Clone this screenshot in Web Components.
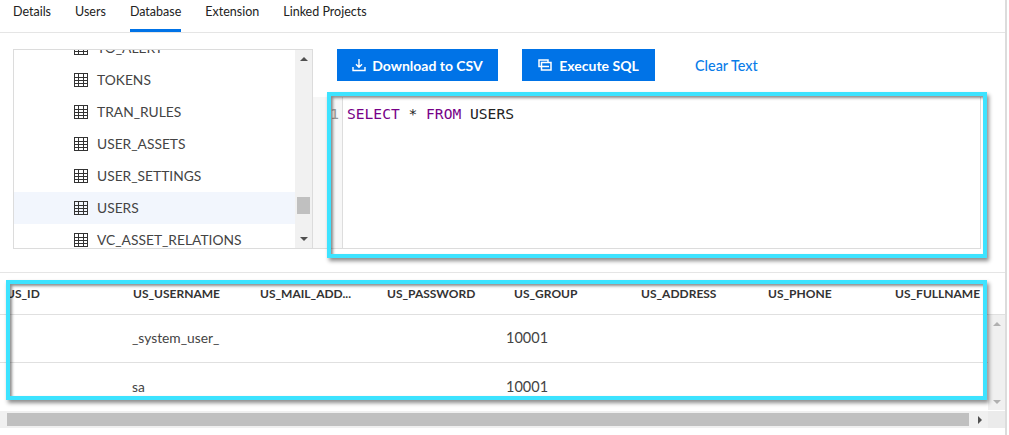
<!DOCTYPE html>
<html>
<head>
<meta charset="utf-8">
<title>Database</title>
<style>
  html, body { margin: 0; height: 100%; overflow: hidden; background: #fff; font-family: Lato, "Open Sans", sans-serif; color: #333; }
</style>
</head>
<body>
<project-page></project-page>
<script>
const ICON_TABLE = `<svg width="14" height="14" viewBox="0 0 14 14" fill="none" stroke="#333" stroke-width="1" shape-rendering="crispEdges"><path d="M.5.5h13v13H.5zM.5 4.5h13M.5 7.5h13M.5 10.5h13M4.5.5v13M9.5.5v13"/></svg>`;

class AppTabs extends HTMLElement {
  constructor(){
    super();
    this.attachShadow({ mode: 'open' });
    this.shadowRoot.innerHTML = `
      <style>
        :host{ display: flex; gap: 24px; height: 32px; padding-left: 13px; border-bottom: 1px solid #e5e5e5; font-size: 12.5px; color: #222; box-sizing: content-box; }
        span{ height: 32px; line-height: 23px; box-sizing: border-box; }
        .active{ border-bottom: 3px solid #0073e7; }
      </style>
      <span>Details</span><span>Users</span><span class="active">Database</span><span>Extension</span><span>Linked Projects</span>
    `;
  }
}

class VScrollbar extends HTMLElement {
  constructor(){
    super();
    this.attachShadow({ mode: 'open' });
    this.shadowRoot.innerHTML = `
      <style>
        :host{ display: flex; flex-direction: column; align-items: center; width: 17px; background: #f1f1f1; position: relative; flex: none; }
        .up, .down{ width: 0; height: 0; border-left: 4px solid transparent; border-right: 4px solid transparent; }
        .up{ border-bottom: 4px solid var(--arrow, #505050); margin-top: 7px; }
        .down{ border-top: 4px solid var(--arrow, #505050); margin-top: auto; margin-bottom: var(--arrow-bottom, 7px); }
        .thumb{ position: absolute; left: 2px; right: 2px; top: var(--thumb-top, 0); height: var(--thumb-height, 0); background: #c0c0c0; }
      </style>
      <div class="up"></div><div class="thumb"></div><div class="down"></div>
    `;
  }
}

class DbTree extends HTMLElement {
  constructor(){
    super();
    this.attachShadow({ mode: 'open' });
    const names = ['TO_ALERT', 'TOKENS', 'TRAN_RULES', 'USER_ASSETS', 'USER_SETTINGS', 'USERS', 'VC_ASSET_RELATIONS'];
    const rows = names.map(n => `<div class="row${n === 'USERS' ? ' selected' : ''}">${ICON_TABLE}<span>${n}</span></div>`).join('');
    this.shadowRoot.innerHTML = `
      <style>
        :host{ display: flex; width: 300px; height: 200px; box-sizing: border-box; border: 1px solid #dcdcdc; overflow: hidden; flex: none; }
        .list{ flex: 1; margin-top: -18px; min-width: 0; }
        .row{ display: flex; align-items: center; gap: 9px; height: 32px; padding-left: 60px; font-size: 13.8px; color: #444; white-space: nowrap; }
        .row span{ padding-bottom: 2px; }
        .selected{ background: #f2f6fd; }
        v-scrollbar{ --thumb-top: 147px; --thumb-height: 17px; }
      </style>
      <div class="list">${rows}</div>
      <v-scrollbar></v-scrollbar>
    `;
  }
}

class SqlToolbar extends HTMLElement {
  constructor(){
    super();
    this.attachShadow({ mode: 'open' });
    this.shadowRoot.innerHTML = `
      <style>
        :host{ display: flex; align-items: center; height: 32px; padding-left: 24px; font-size: 14px; }
        button{ display: flex; align-items: center; justify-content: center; gap: 6px; height: 32px; border: 0; padding: 0; background: #0073e7; color: #fff; font: 700 14px Lato, sans-serif; }
        .csv{ width: 161px; }
        .exec{ width: 133px; margin-left: 24px; gap: 7px; }
        .clear{ margin-left: 40px; padding-top: 1px; color: #0a7ce8; font-size: 14.4px; font-weight: 500; }
      </style>
      <button class="csv"><svg width="14" height="14" viewBox="0 0 14 14" fill="none" stroke="#fff" stroke-width="1.4"><path d="M7 1v8M4 6.2 7 9.2l3-3M1 9v3.5h12V9"/></svg>Download to CSV</button>
      <button class="exec"><svg width="14" height="12" viewBox="0 0 14 12" fill="none" stroke="#fff" stroke-width="1.5"><path d="M10 3V1H1V7.5H3.5M3.5 3.5H13V11H3.5zM3.5 7.5H11"/></svg>Execute SQL</button>
      <span class="clear">Clear Text</span>
    `;
  }
}

class SqlEditor extends HTMLElement {
  constructor(){
    super();
    this.attachShadow({ mode: 'open' });
    this.shadowRoot.innerHTML = `
      <style>
        :host{ display: flex; height: 152px; box-sizing: border-box; border-bottom: 1px solid #dcdcdc; border-right: 1px solid #dcdcdc; font: 14.6px/18px "DejaVu Sans Mono", monospace; }
        .gutter{ width: 30px; flex: none; background: #f7f7f7; border-right: 1px solid #ddd; color: #999; text-align: right; padding: 8px 3px 0 0; box-sizing: border-box; }
        .code{ padding: 8px 0 0 4px; color: #222; white-space: pre; }
        .kw{ color: #770088; }
      </style>
      <div class="gutter">1</div>
      <div class="code"><span class="kw">SELECT</span> * <span class="kw">FROM</span> USERS</div>
    `;
  }
}

class ResultTable extends HTMLElement {
  constructor(){
    super();
    this.attachShadow({ mode: 'open' });
    const cols = ['US_ID', 'US_USERNAME', 'US_MAIL_ADD...', 'US_PASSWORD', 'US_GROUP', 'US_ADDRESS', 'US_PHONE', 'US_FULLNAME'];
    this.shadowRoot.innerHTML = `
      <style>
        :host{ display: block; }
        .grid{ display: grid; grid-template-columns: repeat(8, 127px); white-space: nowrap; }
        .clip{ overflow: hidden; flex: 1; min-width: 0; }
        .grid > *{ padding-left: 6px; overflow: hidden; }
        .head{ margin-left: -127px; height: 41px; grid-template-columns: repeat(9, 127px); }
        .head span{ font-size: 12px; font-weight: 700; color: #333; line-height: 41px; }
        .line{ height: 1px; background: #e0e0e0; }
        .body{ display: flex; }
        .rows{ flex: 1; min-width: 0; }
        .data{ height: 47px; line-height: 45px; font-size: 13.8px; color: #444; }
        .data.last{ line-height: 47px; }
        .data .user{ margin-left: -1px; }
        .data .group{ margin-left: -8px; font-size: 14.5px; }
        v-scrollbar{ --arrow: #b0b0b0; --arrow-bottom: 6px; background: #f0f0f0; }
        .hbar{ display: flex; align-items: center; height: 17px; background: #f0f0f0; margin-top: 1px; }
        .hthumb{ margin-left: 7px; width: 962px; height: 13px; background: #c0c0c0; }
        .harrow{ margin-left: 9px; width: 0; height: 0; border-left: 4px solid #505050; border-top: 4px solid transparent; border-bottom: 4px solid transparent; }
        .corner{ margin-left: auto; width: 17px; height: 17px; background: #ebebeb; }
      </style>
      <div class="clip"><div class="grid head"><span></span>${cols.map(c => `<span>${c}</span>`).join('')}</div></div>
      <div class="line"></div>
      <div class="body">
        <div class="rows">
          <div class="grid data"><span></span><span class="user">_system_user_</span><span></span><span></span><span class="group">10001</span></div>
          <div class="line"></div>
          <div class="grid data last"><span></span><span class="user">sa</span><span></span><span></span><span class="group">10001</span></div>
        </div>
        <v-scrollbar></v-scrollbar>
      </div>
      <div class="hbar"><div class="hthumb"></div><div class="harrow"></div><div class="corner"></div></div>
    `;
  }
}

class HighlightBox extends HTMLElement {
  constructor(){
    super();
    this.attachShadow({ mode: 'open' });
    this.shadowRoot.innerHTML = `
      <style>
        :host{ display: block; position: absolute; box-sizing: border-box; border: 4px solid #3de3ff; box-shadow: 2px 3px 4px rgba(0,0,0,.45), inset 2px 2px 3px rgba(0,0,0,.45); pointer-events: none; }
      </style>
    `;
  }
}

class ProjectPage extends HTMLElement {
  constructor(){
    super();
    this.attachShadow({ mode: 'open' });
    this.shadowRoot.innerHTML = `
      <style>
        :host{ display: block; position: relative; width: 1009px; height: 435px; overflow: hidden; }
        .frame{ width: 1005px; height: 435px; border-right: 2px solid #dcdcdc; }
        .work{ display: flex; height: 240px; padding: 16px 0 0 13px; box-sizing: border-box; border-bottom: 1px solid #e5e5e5; }
        .right{ flex: 1; min-width: 0; display: flex; flex-direction: column; }
        sql-editor{ margin-top: 16px; width: 668px; }
        .a{ left: 327px; top: 92px; width: 660px; height: 166px; }
        .b{ left: 6px; top: 280px; width: 981px; height: 120px; }
      </style>
      <div class="frame">
        <app-tabs></app-tabs>
        <div class="work">
          <db-tree></db-tree>
          <div class="right">
            <sql-toolbar></sql-toolbar>
            <sql-editor></sql-editor>
          </div>
        </div>
        <result-table></result-table>
      </div>
      <highlight-box class="a"></highlight-box>
      <highlight-box class="b"></highlight-box>
    `;
  }
}

customElements.define('app-tabs', AppTabs);
customElements.define('v-scrollbar', VScrollbar);
customElements.define('db-tree', DbTree);
customElements.define('sql-toolbar', SqlToolbar);
customElements.define('sql-editor', SqlEditor);
customElements.define('result-table', ResultTable);
customElements.define('highlight-box', HighlightBox);
customElements.define('project-page', ProjectPage);
</script>
</body>
</html>
